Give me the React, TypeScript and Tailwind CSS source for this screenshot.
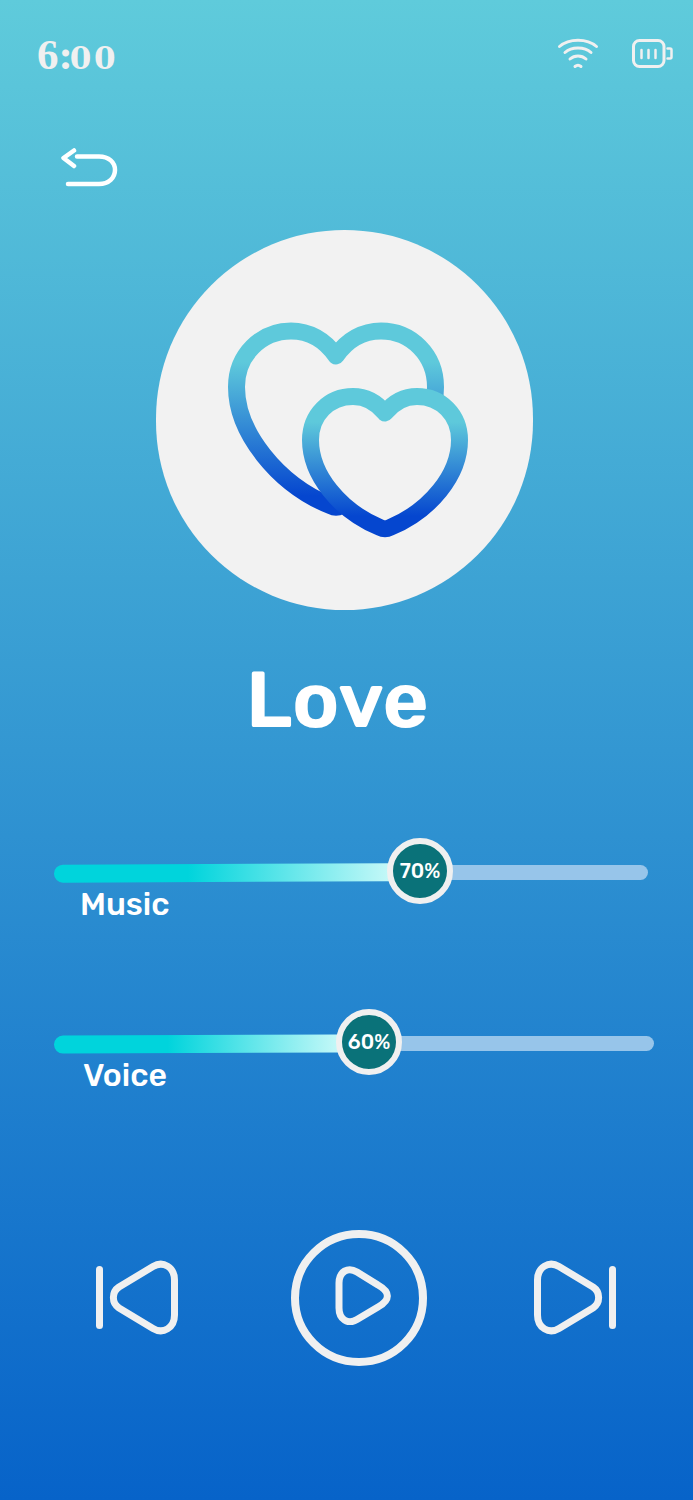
import React from 'react';

function Wifi() {
  return (
    <svg width="42" height="32" viewBox="0 0 42 32" fill="none" stroke="#f0f0f0" strokeWidth="3" strokeLinecap="round">
      <path d="M2.500 8.500C12 0 30 0 39.500 8.500" />
      <path d="M8 14.500C14.500 8.500 27.500 8.500 34 14.500" />
      <path d="M13 21C17.500 17 24.500 17 29 21" />
      <path d="M18 28.500C19.800 27 22.200 27 24 28.500" />
    </svg>
  );
}

function Battery() {
  return (
    <svg width="41" height="30" viewBox="0 0 41 30" fill="none" stroke="#f0f0f0" strokeLinecap="round">
      <rect x="1.500" y="1.500" width="30.500" height="26" rx="6" strokeWidth="3" />
      <path d="M9.500 11v8M16.500 11v8M23.500 11v8" strokeWidth="2.500" />
      <path d="M35.500 9.500h2.500a1.500 1.500 0 0 1 1.500 1.500v7a1.500 1.500 0 0 1-1.500 1.500h-2.500" strokeWidth="2.500" />
    </svg>
  );
}

function BackIcon() {
  return (
    <svg width="60" height="42" viewBox="0 0 60 42" fill="none" stroke="#ffffff" strokeWidth="4.500" strokeLinecap="round" strokeLinejoin="round">
      <path d="M13 3.500L2.500 11L13 19" />
      <path d="M16 9.500H38C48 9.500 54 15.500 54 23C54 30.500 48 37 38 37H7" />
    </svg>
  );
}

function Hearts() {
  return (
    <svg width="260" height="230" viewBox="0 0 260 230" fill="none" strokeWidth="17" strokeLinecap="round" strokeLinejoin="round">
      <defs>
        <linearGradient id="bigHeart" gradientUnits="userSpaceOnUse" x1="0" y1="52" x2="0" y2="186">
          <stop offset="0" stopColor="#5ec9db" />
          <stop offset="1" stopColor="#0546cf" />
        </linearGradient>
        <linearGradient id="smallHeart" gradientUnits="userSpaceOnUse" x1="0" y1="112" x2="0" y2="206">
          <stop offset="0" stopColor="#5ec9db" />
          <stop offset="1" stopColor="#0546cf" />
        </linearGradient>
      </defs>
      <path
        stroke="url(#bigHeart)"
        d="M109 46C98 30 82 21 64 21C34 21 9.500 45 9.500 77C9.500 122 50 174 104 196C107 197.500 111 197.500 114 196C168 174 208.500 122 208.500 77C208.500 45 184 21 154 21C136 21 120 30 109 46Z"
      />
      <path
        fill="#f2f2f2"
        stroke="url(#smallHeart)"
        d="M158 103C150 93 139 86.500 126 86.500C102 86.500 83.500 105 83.500 130C83.500 165 113 201 153 217.500C156 219 160 219 163 217.500C203 201 232.500 165 232.500 130C232.500 105 214 86.500 190 86.500C177 86.500 166 93 158 103Z"
      />
    </svg>
  );
}

function SkipIcon({ className }: { className?: string }) {
  return (
    <svg className={className} width="95" height="85" viewBox="0 1 95 85" fill="none" stroke="#f0f0f0" strokeWidth="7" strokeLinecap="round" strokeLinejoin="round">
      <path d="M9.500 14.500V70.500" />
      <path d="M84.500 25C84.500 12 73 5.500 63 11.500L29 32C21.500 37 21.500 48 29 53L63 73.500C73 79.500 84.500 73 84.500 60Z" />
    </svg>
  );
}

function PlayIcon() {
  return (
    <svg width="56" height="60" viewBox="0 0 56 60" fill="none" stroke="#f0f0f0" strokeWidth="7" strokeLinejoin="round">
      <path d="M4 18C4 6.500 13 1.500 22 7L43 20C55.500 27 55.500 35 43 42L22 54.500C13 60 4 54.500 4 43Z" />
    </svg>
  );
}

function Slider({ label, value, fillClass, labelClass, wrapClass }: { label: string; value: number; fillClass: string; labelClass: string; wrapClass: string }) {
  return (
    <div className={wrapClass}>
      <div className="flex items-center h-[66px]">
        <div className={`h-[18px] mt-[3px] shrink-0 rounded-l-full rotate-[-0.25deg] bg-linear-to-r/srgb from-[#00d4dc] from-40% to-[#c4f8f8] ${fillClass}`} />
        <div className="relative z-10 -mx-[2px] shrink-0 w-[66px] h-[66px] rounded-full border-[6px] border-[#f0f0f0] bg-[#0a7279] flex items-center justify-center text-white text-[20.500px] font-medium font-['Rubik','Roboto',sans-serif]">
          {value}%
        </div>
        <div className="h-[15px] mt-[3px] flex-1 rounded-r-full bg-[#97c5ea]" />
      </div>
      <div className={`text-white text-[32px] leading-[38px] font-medium -mt-[19px] font-['Rubik','Roboto',sans-serif] ${labelClass}`}>
        {label}
      </div>
    </div>
  );
}

export default function App() {
  return (
    <div className="w-full h-[1500px] flex flex-col overflow-hidden bg-linear-to-b/srgb from-[#5fcbdb] to-[#0763c9]">
      {/* Status bar */}
      <div className="flex items-center justify-between pl-[37px] pr-[20px] pt-[38px] h-[70px]">
        <span className="flex items-baseline text-[#f0f0f0] font-bold">
          <span className="text-[43px] leading-none font-['Liberation_Serif',serif]">6:</span>
          <span className="text-[31px] leading-none tracking-[2.500px] -ml-[3px] font-['DejaVu_Serif',serif]">00</span>
        </span>
        <div className="flex items-center gap-[33px]">
          <Wifi />
          <Battery />
        </div>
      </div>

      <div className="ml-[61px] mt-[77px]">
        <BackIcon />
      </div>

      {/* Artwork */}
      <div className="ml-[156px] mt-[41px] w-[377px] h-[380px] rounded-full bg-[#f2f2f2] flex items-center justify-center">
        <div className="ml-[24px] mt-[10px]">
          <Hearts />
        </div>
      </div>

      <h1 className="ml-[246px] mt-[42px] text-white text-[79px] leading-[96px] font-semibold font-['Rubik','Roboto',sans-serif]">Love</h1>

      {/* Sliders */}
      <Slider label="Music" value={70} wrapClass="ml-[54px] mr-[45px] mt-[90px]" fillClass="w-[335px]" labelClass="ml-[26px]" />
      <Slider label="Voice" value={60} wrapClass="ml-[54px] mr-[39px] mt-[86px]" fillClass="w-[284px]" labelClass="ml-[29px]" />

      {/* Controls */}
      <div className="flex items-center mt-[136px] ml-[90px]">
        <SkipIcon />
        <div className="ml-[106px] w-[136px] h-[136px] rounded-full border-[8px] border-[#f0f0f0] flex items-center justify-center">
          <div className="pl-2 pb-[6px]">
            <PlayIcon />
          </div>
        </div>
        <SkipIcon className="ml-[100px] -scale-x-100" />
      </div>
    </div>
  );
}
